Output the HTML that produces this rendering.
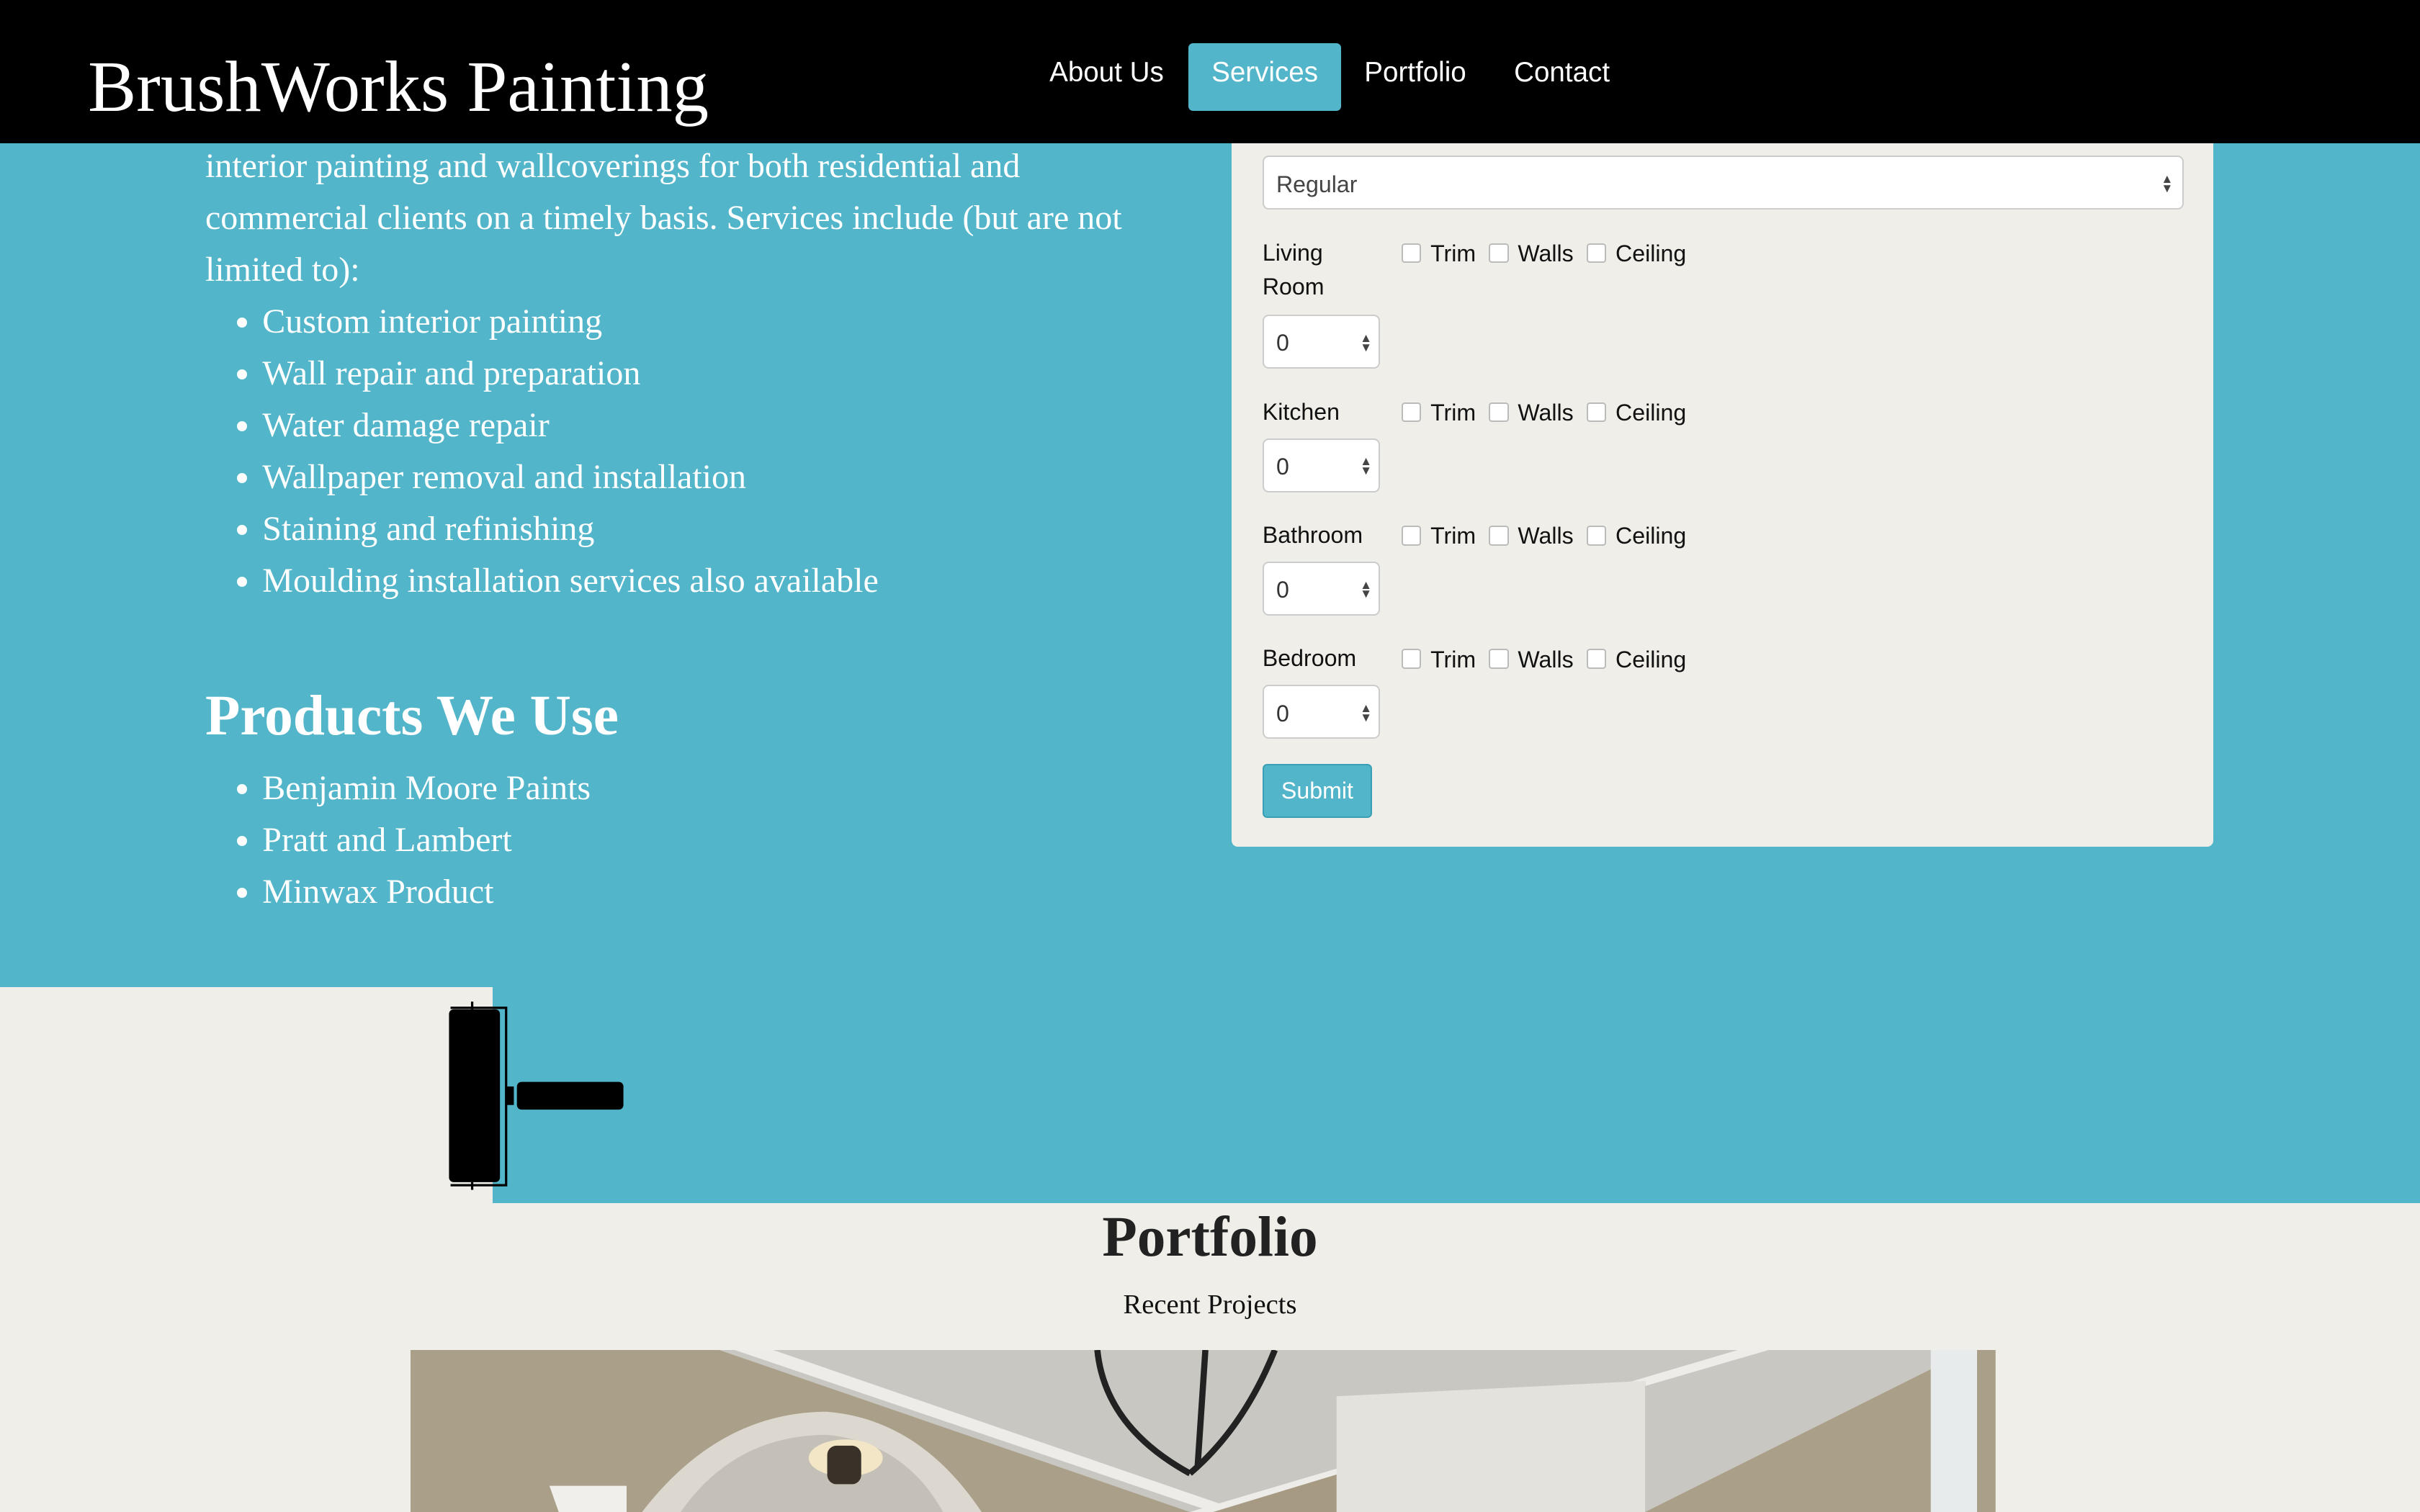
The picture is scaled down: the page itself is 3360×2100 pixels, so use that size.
<!DOCTYPE html>
<html><head><meta charset="utf-8"><style>
html{zoom:2.142857}
body{margin:0;width:1568px;height:980px;overflow:hidden;background:#efeee8;position:relative;font-family:"Liberation Serif",serif}
.a{position:absolute}
.hdr{left:0;top:0;width:1568px;height:93px;background:#000}
.title{left:57px;top:28px;color:#fff;font-size:47px;line-height:56px}
.nav{font-family:"Liberation Sans",sans-serif;font-size:18px;color:#fff;top:28px;height:44px;line-height:38px}
.teal{background:#52b5c9}
.lt{left:133px;color:#fff;font-size:22.4px;line-height:33.6px}
ul{margin:0;padding:0 0 0 37px}
.card{left:798px;top:93px;width:636px;height:456px;background:#efeee8;border-radius:0 0 4px 4px}
.sf{font-family:"Liberation Sans",sans-serif;font-size:15px;color:#111}
.inp{background:#fff;border:1px solid #ccc;border-radius:4px;box-sizing:border-box}
.cb{display:inline-block;width:11px;height:11px;border:1px solid #bbb;border-radius:2px;background:#fff;vertical-align:-1px;margin-right:6px}
.arr{font-size:8px;line-height:6px;color:#444}
</style></head><body>
<div class="a teal" style="left:0;top:93px;width:1568px;height:547px"></div>
<div class="a teal" style="left:319px;top:640px;width:1249px;height:140px"></div>
<div class="a hdr"></div>
<div class="a title">BrushWorks Painting</div>
<div class="a nav" style="left:680px">About Us</div>
<div class="a nav" style="left:770px;width:99px;background:#52b5c9;border-radius:3px;text-align:center">Services</div>
<div class="a nav" style="left:884px">Portfolio</div>
<div class="a nav" style="left:981px">Contact</div>

<div class="a lt" style="top:91px;width:630px">interior painting and wallcoverings for both residential and commercial clients on a timely basis. Services include (but are not limited to):
<ul><li>Custom interior painting</li><li>Wall repair and preparation</li><li>Water damage repair</li><li>Wallpaper removal and installation</li><li>Staining and refinishing</li><li>Moulding installation services also available</li></ul></div>
<div class="a lt" style="top:442px;font-size:37px;font-weight:bold;line-height:44px">Products We Use</div>
<div class="a lt" style="top:494px"><ul><li>Benjamin Moore Paints</li><li>Pratt and Lambert</li><li>Minwax Product</li></ul></div>

<div class="a card"></div>
<div class="a inp sf" style="left:818px;top:101px;width:597px;height:35px;padding:9px 8px;color:#444">Regular<span class="a arr" style="right:6px;top:11px">▲<br>▼</span></div>
<div class="a sf" style="left:818px;top:153px;line-height:22px">Living<br>Room</div>
<div class="a sf" style="left:818px;top:256px;line-height:22px">Kitchen</div>
<div class="a sf" style="left:818px;top:336px;line-height:22px">Bathroom</div>
<div class="a sf" style="left:818px;top:416px;line-height:22px">Bedroom</div>
<div class="a sf" style="left:908px;top:156px"><span class="cb"></span>Trim &nbsp;<span class="cb"></span>Walls &nbsp;<span class="cb"></span>Ceiling</div>
<div class="a sf" style="left:908px;top:259px"><span class="cb"></span>Trim &nbsp;<span class="cb"></span>Walls &nbsp;<span class="cb"></span>Ceiling</div>
<div class="a sf" style="left:908px;top:339px"><span class="cb"></span>Trim &nbsp;<span class="cb"></span>Walls &nbsp;<span class="cb"></span>Ceiling</div>
<div class="a sf" style="left:908px;top:419px"><span class="cb"></span>Trim &nbsp;<span class="cb"></span>Walls &nbsp;<span class="cb"></span>Ceiling</div>
<div class="a inp sf" style="left:818px;top:204px;width:76px;height:35px;padding:9px 8px;color:#333">0<span class="a arr" style="right:4px;top:11px">▲<br>▼</span></div>
<div class="a inp sf" style="left:818px;top:284px;width:76px;height:35px;padding:9px 8px;color:#333">0<span class="a arr" style="right:4px;top:11px">▲<br>▼</span></div>
<div class="a inp sf" style="left:818px;top:364px;width:76px;height:35px;padding:9px 8px;color:#333">0<span class="a arr" style="right:4px;top:11px">▲<br>▼</span></div>
<div class="a inp sf" style="left:818px;top:444px;width:76px;height:35px;padding:9px 8px;color:#333">0<span class="a arr" style="right:4px;top:11px">▲<br>▼</span></div>
<div class="a sf" style="left:818px;top:495px;width:71px;height:35px;background:#52b5c9;border:1px solid #3a9fb5;border-radius:3px;box-sizing:border-box;color:#fff;text-align:center;line-height:33px">Submit</div>

<svg class="a" style="left:288px;top:648px" width="120" height="124" viewBox="0 0 120 124">
<rect x="3" y="6" width="33" height="112" rx="3" fill="#000"/>
<path d="M4 5 H40 V120 H4" fill="none" stroke="#000" stroke-width="1.5"/>
<line x1="18" y1="1" x2="18" y2="6" stroke="#000" stroke-width="1.5"/>
<line x1="18" y1="118" x2="18" y2="123" stroke="#000" stroke-width="1.5"/>
<rect x="40" y="56" width="5" height="12" fill="#000"/>
<rect x="47" y="53" width="69" height="18" rx="3" fill="#000"/>
</svg>

<div class="a" style="left:0;top:780px;width:1568px;text-align:center;font-size:37px;font-weight:bold;color:#222;line-height:44px">Portfolio</div>
<div class="a" style="left:0;top:834px;width:1568px;text-align:center;font-size:18px;color:#111;line-height:24px">Recent Projects</div>

<svg class="a" style="left:266px;top:875px" width="1027" height="105">
<rect width="1027" height="105" fill="#aa9f88"/>
<path d="M200 0 L505 105 L800 105 L1010 0Z" fill="#c9c7c2"/>
<path d="M210 0 L505 100 L520 105 L540 105 L235 0Z" fill="#eeece8"/>
<path d="M505 105 L520 105 L880 0 L860 0Z" fill="#eeece8"/>
<path d="M520 105 L800 105 L800 20Z" fill="#a69a83"/>
<path d="M150 105 Q200 40 270 40 Q330 45 370 105Z" fill="#dcd8d0"/>
<path d="M175 105 Q210 55 270 55 Q320 60 345 105Z" fill="#c4c0b8"/>
<ellipse cx="282" cy="70" rx="24" ry="12" fill="#f2e6c6"/>
<rect x="270" y="62" width="22" height="25" rx="6" fill="#3a3228"/>
<path d="M600 105 L600 30 L800 20 L800 105" fill="#e4e2dc"/>
<rect x="985" y="0" width="30" height="105" fill="#e8ebec"/>
<path d="M445 0 Q450 50 505 80 M560 0 Q540 50 505 80 M515 0 L510 75" fill="none" stroke="#222" stroke-width="4"/>
<path d="M90 88 L140 88 L140 105 L96 105Z" fill="#f0efec"/>
</svg>
</body></html>
